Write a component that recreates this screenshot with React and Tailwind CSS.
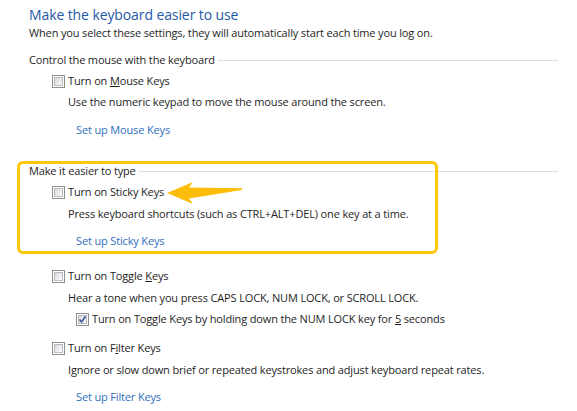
import React from "react";

const font = { fontFamily: '"Open Sans", "Noto Sans", "Liberation Sans", sans-serif' };

const Checkbox = ({ checked }) => (
  <span className="inline-flex h-[13px] w-[13px] shrink-0 items-center justify-center border border-[#8e8f8f] bg-white p-px">
    <span className="relative flex h-full w-full items-center justify-center border border-[#b7bcc2] bg-gradient-to-br from-[#d9dadc] to-[#fbfbfb]">
      {checked && (
        <svg width="9" height="9" viewBox="0 0 9 9" className="absolute">
          <path d="M1.5 4.5 L3.6 7 L7.6 1.2" fill="none" stroke="#3c5a9b" strokeWidth="1.6" />
        </svg>
      )}
    </span>
  </span>
);

const GroupHeader = ({ children, className }) => (
  <div className={`flex h-4 items-center ${className}`}>
    <span className="text-[#1e1e1e]">{children}</span>
    <span className="ml-[3px] h-px flex-1 bg-[#d9dde2]" />
  </div>
);

const CheckRow = ({ children, className, checked }) => (
  <div className={`flex h-4 items-center gap-[3px] ${className}`}>
    <Checkbox checked={checked} />
    <span className="text-[#1e1e1e]">{children}</span>
  </div>
);

const Desc = ({ children, className }) => (
  <div className={`h-4 pl-[39px] leading-4 text-[#1e1e1e] ${className}`}>{children}</div>
);

const Link = ({ children, className }) => (
  <div className={`h-4 pl-[47px] leading-4 text-[#2f6ec0] ${className}`}>{children}</div>
);

export default function App() {
  return (
    <div
      style={font}
      className="relative h-[411px] w-[577px] overflow-hidden bg-white pl-[29px] pr-[19px] pt-[5px] text-[11px] leading-4 tracking-[-0.15px]"
    >
      <div className="h-5 text-[14px] leading-5 tracking-[-0.1px] text-[#1f5aa8]">Make the keyboard easier to use</div>
      <div className="h-4 text-[#1e1e1e]">
        When you select these settings, they will automatically start each time you log on.
      </div>

      <GroupHeader className="mt-[11px]">Control the mouse with the keyboard</GroupHeader>
      <CheckRow className="mt-[5px] pl-[23px]">
        Turn on <u>M</u>ouse Keys
      </CheckRow>
      <Desc className="mt-[5px]">Use the numeric keypad to move the mouse around the screen.</Desc>
      <Link className="mt-[12px]">Set up Mouse Keys</Link>

      <div className="relative pt-[25px]">
        <div className="pointer-events-none absolute left-[-12px] top-[23px] h-[93px] w-[421px] rounded-[6px] border-[3px] border-[#fdc70c]" />
        <GroupHeader>Make it easier to type</GroupHeader>
        <CheckRow className="mt-[5px] pl-[23px]">Turn on Sticky Keys</CheckRow>
        <Desc className="mt-[6px]">
          Press keyboard shortcuts (such as CTRL+ALT+DEL) one key at a time.
        </Desc>
        <Link className="mt-[11px]">Set up Sticky Keys</Link>
        <svg
          width="80"
          height="30"
          viewBox="165 180 80 30"
          className="pointer-events-none absolute left-[136px] top-[42px]"
        >
          <polygon
            points="167,193 193,182 189,187.5 242,188.3 242,190 189,198.5 193,204"
            fill="#fcbd0a"
          />
        </svg>
      </div>

      <CheckRow className="mt-[19px] pl-[23px]">
        Turn on Toggle <u>K</u>eys
      </CheckRow>
      <Desc className="mt-[6px]">Hear a tone when you press CAPS LOCK, NUM LOCK, or SCROLL LOCK.</Desc>
      <CheckRow checked className="mt-[5px] pl-[47px]">
        Turn on Toggle Keys by holding down the NUM LOCK key for <u>5</u> seconds
      </CheckRow>

      <CheckRow className="mt-[13px] pl-[23px]">
        Turn on F<u>i</u>lter Keys
      </CheckRow>
      <Desc className="mt-[6px]">
        Ignore or slow down brief or repeated keystrokes and adjust keyboard repeat rates.
      </Desc>
      <Link className="mt-[11px]">Set up Filter Keys</Link>
    </div>
  );
}
